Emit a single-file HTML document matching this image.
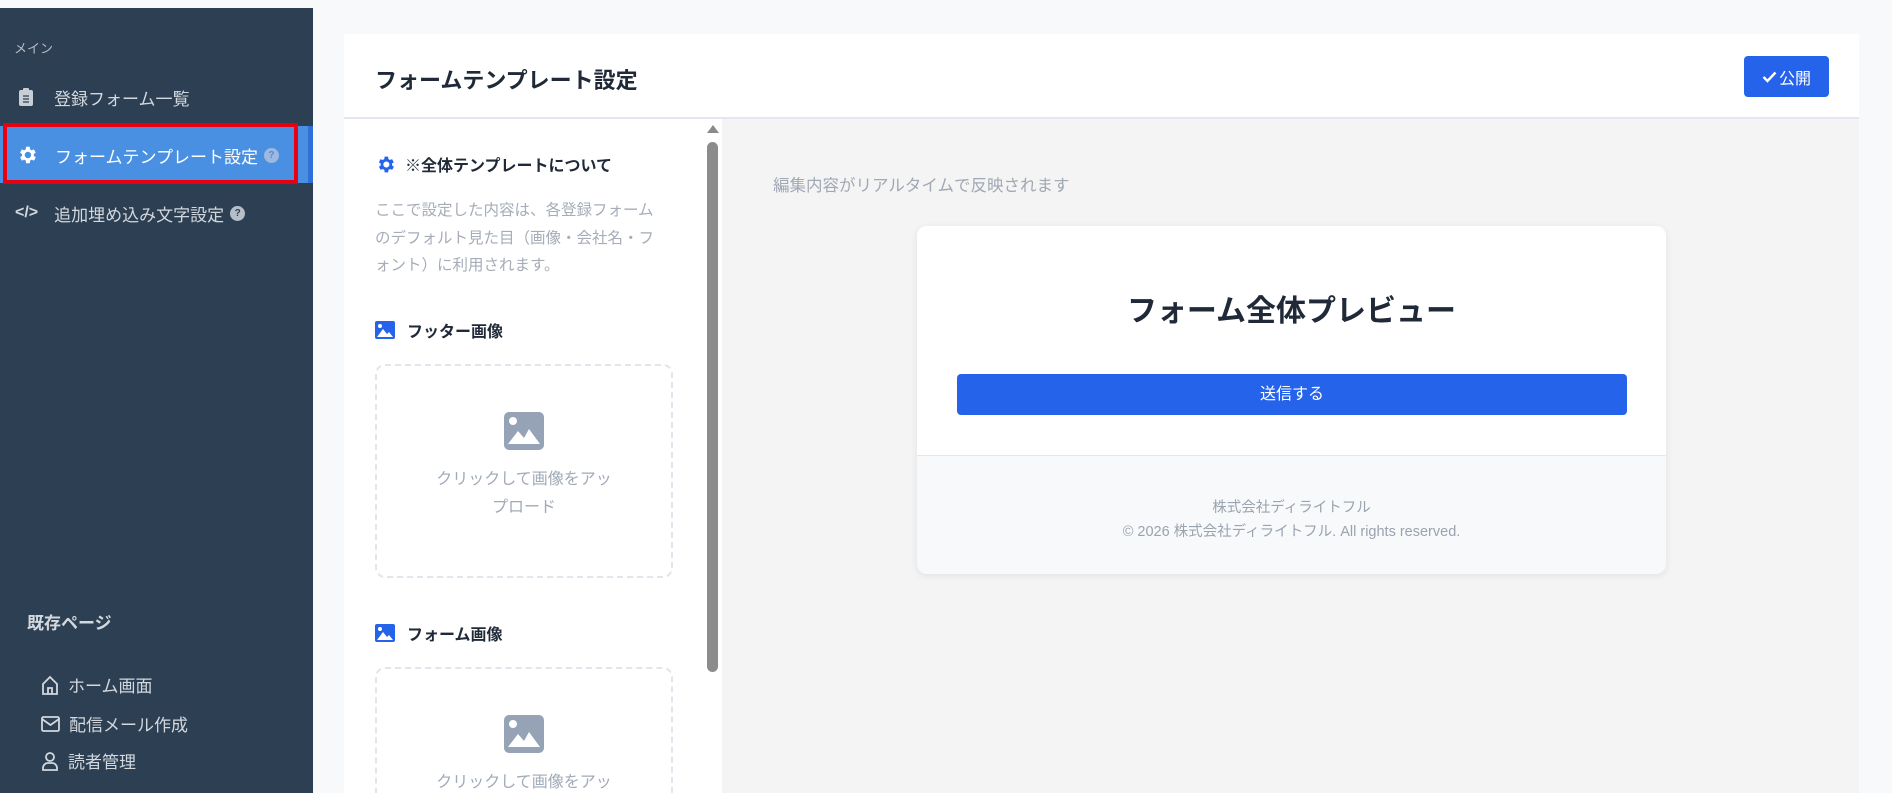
<!DOCTYPE html>
<html style="overflow:hidden;height:793px"><head><meta charset="utf-8"><style>
*{box-sizing:border-box;margin:0;padding:0}
html,body{width:1892px;height:793px;overflow:hidden}
body{background:#f8f9fb;font-family:"Liberation Sans","Noto Sans CJK JP",sans-serif;position:relative}
#wrap{position:relative;width:1892px;height:793px;overflow:hidden}
.abs{position:absolute}
.sb{left:0;top:8px;width:313px;height:785px;background:#2d3f53}
.nav{left:0;width:313px;height:38px;display:flex;align-items:center;color:#d3d8de;font-size:17px}
.q{display:inline-block;width:15px;height:15px;border-radius:50%;background:#b6bec8;color:#2d3f53;font-size:10px;font-weight:bold;text-align:center;line-height:15px;margin-left:6px}
.sub{left:41px;display:flex;align-items:center;color:#d3d8de;font-size:17px}
.sub svg{margin-right:9px}
.desc{color:#a6adb8;font-size:15.5px;line-height:27.5px}
.h{display:flex;align-items:center;font-weight:bold;font-size:16px;color:#1f2937}
.drop{left:375px;width:298px;border:2px dashed #e2e6ec;border-radius:10px;text-align:center;color:#a0aab8;font-size:16px;line-height:28px}
</style></head><body><div id="wrap">
<div class="abs sb"></div>
<div class="abs" style="left:14px;top:38px;color:#b6bec8;font-size:13px">メイン</div>
<div class="abs nav" style="top:78px"><svg style="margin-left:19px;margin-right:21px" width="14" height="18" viewBox="0 0 14 18"><rect x="0" y="2" width="14" height="16" rx="2" fill="#c8ced6"/><rect x="4" y="0" width="6" height="4" rx="1" fill="#c8ced6"/><path d="M4 8h6M4 11h6M4 14h6" stroke="#2d3f53" stroke-width="1.3"/></svg>登録フォーム一覧</div>
<div class="abs" style="left:0;top:126px;width:313px;height:57px;background:#4a90e2"></div>
<div class="abs" style="left:308px;top:126px;width:5px;height:57px;background:#2f6fd6"></div>
<div class="abs" style="left:3px;top:123px;width:295px;height:61px;border:4px solid #e60012"></div>
<div class="abs nav" style="top:136px;color:#fff"><svg style="margin-left:16px;margin-right:17px" width="22" height="22" viewBox="0 0 24 24"><path fill="#fff" d="M19.4 13a7.5 7.5 0 000-2l2.1-1.6-2-3.5-2.5 1a7 7 0 00-1.7-1L15 3h-4l-.4 2.9a7 7 0 00-1.7 1l-2.5-1-2 3.5L6.6 11a7.5 7.5 0 000 2l-2.1 1.6 2 3.5 2.5-1a7 7 0 001.7 1L11 21h4l.4-2.9a7 7 0 001.7-1l2.5 1 2-3.5zM13 15.5a3.5 3.5 0 110-7 3.5 3.5 0 010 7z"/></svg>フォームテンプレート設定<span class="q" style="background:#9db9e0;color:#4a90e2">?</span></div>
<div class="abs nav" style="top:194px"><span style="margin-left:15px;margin-right:16px;font-weight:bold;font-size:16px;color:#d3d8de">&lt;/&gt;</span>追加埋め込み文字設定<span class="q">?</span></div>
<div class="abs" style="left:27px;top:609px;color:#d3d8de;font-size:17px;font-weight:bold">既存ページ</div>
<div class="abs sub" style="top:672px"><svg width="18" height="20" viewBox="0 0 18 20" fill="none" stroke="#d3d8de" stroke-width="1.8"><path d="M2 9L9 2l7 7v10H2z"/><path d="M7 19v-6h4v6"/></svg>ホーム画面</div>
<div class="abs sub" style="top:711px"><svg width="19" height="16" viewBox="0 0 19 16" fill="none" stroke="#d3d8de" stroke-width="1.8"><rect x="1" y="1" width="17" height="14" rx="1.5"/><path d="M1 3l8.5 6L18 3"/></svg>配信メール作成</div>
<div class="abs sub" style="top:748px"><svg width="18" height="20" viewBox="0 0 18 20" fill="none" stroke="#d3d8de" stroke-width="1.8"><circle cx="9" cy="6" r="4"/><path d="M2 19v-2a5 5 0 015-5h4a5 5 0 015 5v2z"/></svg>読者管理</div>

<div class="abs" style="left:344px;top:34px;width:1515px;height:759px;background:#fff"></div>
<div class="abs" style="left:344px;top:117px;width:1515px;height:2px;background:#e3e8f0"></div>
<div class="abs" style="left:375px;top:63px;font-size:22px;font-weight:bold;color:#1f2937">フォームテンプレート設定</div>
<div class="abs" style="left:1744px;top:56px;width:85px;height:41px;background:#2563eb;border-radius:4px;color:#fff;font-size:16px;display:flex;align-items:center;justify-content:center"><svg width="15" height="12" viewBox="0 0 15 12" style="margin-right:2px"><path d="M1.5 6l4 4L13.5 1.5" fill="none" stroke="#fff" stroke-width="2.4"/></svg>公開</div>

<div class="abs" style="left:707px;top:125px;width:0;height:0;border-left:6px solid transparent;border-right:6px solid transparent;border-bottom:8px solid #8a8a8a"></div>
<div class="abs" style="left:707px;top:142px;width:11px;height:530px;border-radius:6px;background:#8c8c8c"></div>
<div class="abs" style="left:722px;top:119px;width:1137px;height:674px;background:#f4f4f4"></div>

<div class="abs h" style="left:375px;top:152px"><svg width="21" height="21" viewBox="0 0 24 24" style="margin-right:9px"><path fill="#2563eb" d="M19.4 13a7.5 7.5 0 000-2l2.1-1.6-2-3.5-2.5 1a7 7 0 00-1.7-1L15 3h-4l-.4 2.9a7 7 0 00-1.7 1l-2.5-1-2 3.5L6.6 11a7.5 7.5 0 000 2l-2.1 1.6 2 3.5 2.5-1a7 7 0 001.7 1L11 21h4l.4-2.9a7 7 0 001.7-1l2.5 1 2-3.5zM13 15.5a3.5 3.5 0 110-7 3.5 3.5 0 010 7z"/></svg>※全体テンプレートについて</div>
<div class="abs desc" style="left:375px;top:197px;width:300px">ここで設定した内容は、各登録フォーム<br>のデフォルト見た目（画像・会社名・フ<br>ォント）に利用されます。</div>
<div class="abs h" style="left:375px;top:318px"><svg width="20" height="18" viewBox="0 0 20 18" style="margin-right:12px"><rect width="20" height="18" rx="2" fill="#2563eb"/><circle cx="5" cy="5" r="2" fill="#fff"/><path d="M2 16l6-8 4 5 2-2 4 5z" fill="#fff"/></svg>フッター画像</div>
<div class="abs drop" style="top:364px;height:214px;padding-top:46px"><svg width="40" height="38" viewBox="0 0 40 38"><rect width="40" height="38" rx="5" fill="#96a3b7"/><circle cx="9" cy="9" r="4" fill="#fff"/><path d="M4 32l10-13 6 7 5-9 11 15z" fill="#fff"/></svg><div style="margin-top:6px">クリックして画像をアッ<br>プロード</div></div>
<div class="abs h" style="left:375px;top:621px"><svg width="20" height="18" viewBox="0 0 20 18" style="margin-right:12px"><rect width="20" height="18" rx="2" fill="#2563eb"/><circle cx="5" cy="5" r="2" fill="#fff"/><path d="M2 16l6-8 4 5 2-2 4 5z" fill="#fff"/></svg>フォーム画像</div>
<div class="abs drop" style="top:667px;height:126px;padding-top:46px;border-bottom:none;border-radius:10px 10px 0 0;overflow:hidden"><svg width="40" height="38" viewBox="0 0 40 38"><rect width="40" height="38" rx="5" fill="#96a3b7"/><circle cx="9" cy="9" r="4" fill="#fff"/><path d="M4 32l10-13 6 7 5-9 11 15z" fill="#fff"/></svg><div style="margin-top:6px">クリックして画像をアッ</div></div>

<div class="abs" style="left:773px;top:172px;color:#a0a8b4;font-size:16.5px">編集内容がリアルタイムで反映されます</div>
<div class="abs" style="left:917px;top:226px;width:749px;height:348px;background:#f8f9fa;border-radius:10px;box-shadow:0 2px 8px rgba(0,0,0,.08);overflow:hidden">
<div style="height:230px;background:#fff;border-bottom:1px solid #e3e8f0;position:relative">
<div style="position:absolute;top:60px;width:100%;text-align:center;font-size:30px;font-weight:bold;color:#1f2937">フォーム全体プレビュー</div>
<div style="position:absolute;left:40px;top:148px;width:670px;height:41px;background:#2563eb;border-radius:4px;color:#fff;font-size:16px;text-align:center;line-height:41px">送信する</div>
</div>
<div style="text-align:center;color:#9aa3b0;font-size:14.5px;line-height:24px;padding-top:40px">株式会社ディライトフル<br>© 2026 株式会社ディライトフル. All rights reserved.</div>
</div>
</div></body></html>
